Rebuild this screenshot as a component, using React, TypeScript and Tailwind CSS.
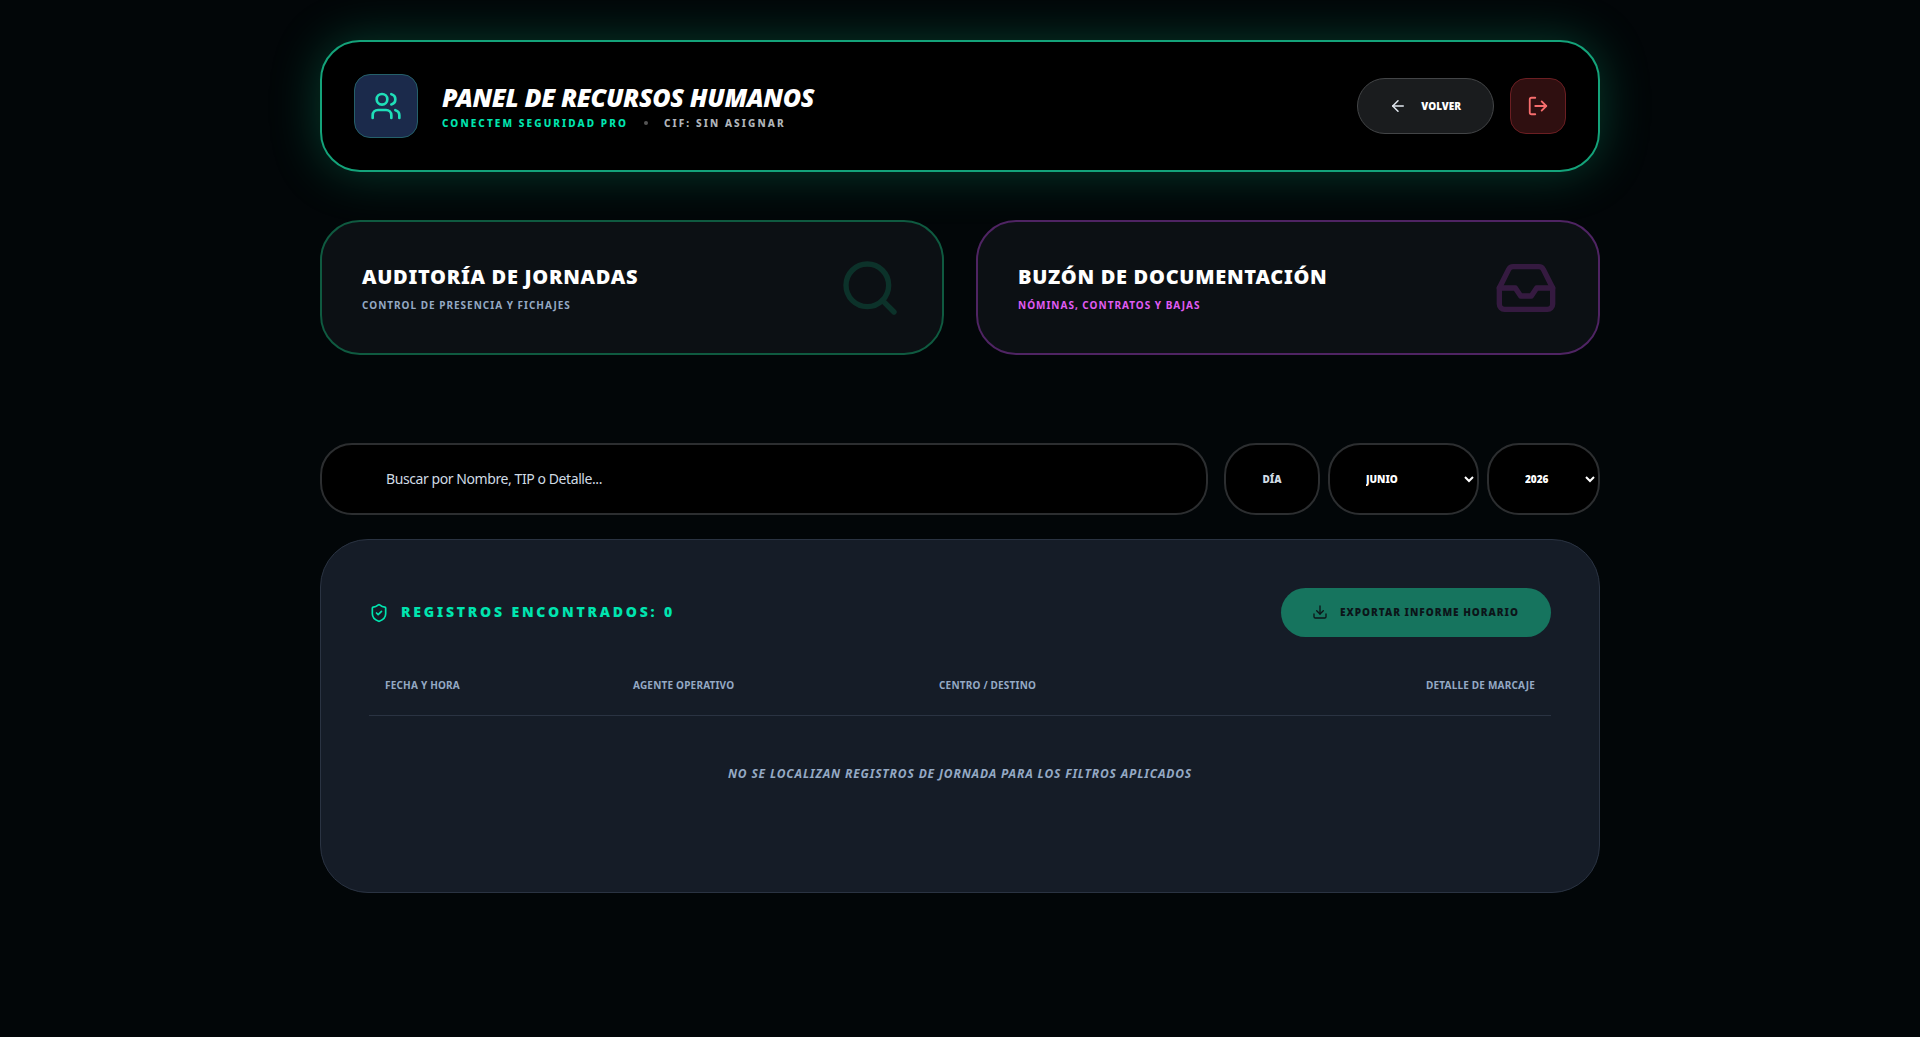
import { ArrowLeft, Download, Inbox, LogOut, Search, ShieldCheck, Users } from "lucide-react";

export default function App() {
  return (
    <div className="min-h-screen bg-[#020608] font-['Noto_Sans','Open_Sans',sans-serif] text-white">
      <main className="mx-auto w-[1280px] pt-10">
        {/* cabecera */}
        <header className="mb-12 flex h-[132px] items-center justify-between rounded-[2.5rem] border-2 border-[#14a37a] bg-black px-8 shadow-[0_0_50px_rgba(16,185,129,0.3)]">
          <div className="flex items-center gap-6">
            <div className="flex h-16 w-16 items-center justify-center rounded-2xl border border-[#25606a] bg-[#1b2a4b]">
              <Users size={32} className="text-[#1fdfb8]" />
            </div>
            <div>
              <h1 className="text-[25px] leading-8 font-black tracking-[-0.015em] text-white italic">
                PANEL DE RECURSOS HUMANOS
              </h1>
              <div className="mt-0.5 flex items-center gap-4 text-[10px] leading-4 font-extrabold tracking-[0.21em]">
                <span className="text-[#00e5b0]">CONECTEM SEGURIDAD PRO</span>
                <span className="h-1 w-1 rounded-full bg-[#555]"></span>
                <span className="text-[#b0b5ba]">CIF: SIN ASIGNAR</span>
              </div>
            </div>
          </div>
          <div className="flex items-center gap-4">
            <button className="flex h-14 items-center gap-[14px] rounded-full border border-[#434547] bg-[#1a1c1e] pr-8 pl-[31px] text-[10px] font-black text-white">
              <ArrowLeft size={18} className="text-[#e2e8f0]" />
              VOLVER
            </button>
            <button className="flex h-14 w-14 items-center justify-center rounded-2xl border border-[#6b1e22] bg-[#2f0f10] text-[#f76d6d]">
              <LogOut size={22} />
            </button>
          </div>
        </header>

        {/* accesos */}
        <div className="mb-[88px] grid grid-cols-2 gap-8">
          <div className="flex h-[135px] items-center justify-between rounded-[2.5rem] border-2 border-[#0f5a40] bg-[#0c1014] px-10">
            <div>
              <h2 className="text-xl leading-7 font-black tracking-[0.035em] text-white">AUDITORÍA DE JORNADAS</h2>
              <p className="mt-1.5 text-[10px] leading-4 font-bold tracking-widest text-[#94a9c4]">CONTROL DE PRESENCIA Y FICHAJES</p>
            </div>
            <Search size={64} className="text-[#10b981] opacity-20" />
          </div>
          <div className="flex h-[135px] items-center justify-between rounded-[2.5rem] border-2 border-[#4f2463] bg-[#0c1014] px-10">
            <div>
              <h2 className="text-xl leading-7 font-black tracking-[0.035em] text-white">BUZÓN DE DOCUMENTACIÓN</h2>
              <p className="mt-1.5 text-[10px] leading-4 font-bold tracking-widest text-[#e05cf5]">NÓMINAS, CONTRATOS Y BAJAS</p>
            </div>
            <Inbox size={64} className="text-[#d946ef] opacity-20" />
          </div>
        </div>

        {/* filtros */}
        <div className="mb-6 flex h-[72px] gap-4">
          <input
            type="text"
            placeholder="Buscar por Nombre, TIP o Detalle..."
            className="h-full flex-1 rounded-[2rem] border-2 border-[#2c2e30] bg-black pb-0.5 pl-16 text-sm tracking-[-0.03em] text-white outline-none placeholder:text-[#d0dbe4]"
          />
          <div className="flex gap-2">
            <input
              type="text"
              placeholder="DÍA"
              className="h-full w-[96px] rounded-[2rem] border-2 border-[#2c2e30] bg-black text-center text-[10px] font-black text-white outline-none placeholder:text-[#d0dbe4]"
            />
            <select className="h-full w-[151px] rounded-[2rem] border-2 border-[#2c2e30] bg-black px-8 text-[10px] font-black text-white outline-none" defaultValue="JUNIO">
              <option>JUNIO</option>
            </select>
            <select className="h-full w-[113px] rounded-[2rem] border-2 border-[#2c2e30] bg-black px-8 text-[10px] font-black text-white outline-none" defaultValue="2026">
              <option>2026</option>
            </select>
          </div>
        </div>

        {/* registros */}
        <section className="h-[354px] rounded-[3rem] border border-[#2a3342] bg-[#151c27] p-12">
          <div className="mb-[41px] flex h-[49px] items-center justify-between">
            <div className="flex items-center gap-3">
              <ShieldCheck size={20} className="text-[#00e5b0]" />
              <h3 className="pb-px text-sm font-black tracking-[0.2em] text-[#00e5b0]">REGISTROS ENCONTRADOS: 0</h3>
            </div>
            <button className="flex h-[49px] items-center gap-3 rounded-full bg-[#16745e] pr-8 pb-px pl-[31px] text-[10px] font-black tracking-[0.1em] text-[#0c1519]">
              <Download size={16} />
              EXPORTAR INFORME HORARIO
            </button>
          </div>
          <table className="w-full table-fixed text-left">
            <thead>
              <tr className="border-b border-[#2a3342] text-[10px] tracking-[0.02em] text-[#94a9c4]">
                <th className="w-[248px] px-4 pb-[22px] font-bold">FECHA Y HORA</th>
                <th className="w-[306px] px-4 pb-[22px] font-bold">AGENTE OPERATIVO</th>
                <th className="px-4 pb-[22px] font-bold">CENTRO / DESTINO</th>
                <th className="w-[300px] px-4 pb-[22px] text-right font-bold">DETALLE DE MARCAJE</th>
              </tr>
            </thead>
            <tbody>
              <tr>
                <td colSpan={4} className="py-[50px] text-center text-xs font-bold tracking-[0.07em] text-[#94a9c4] italic">
                  NO SE LOCALIZAN REGISTROS DE JORNADA PARA LOS FILTROS APLICADOS
                </td>
              </tr>
            </tbody>
          </table>
        </section>
      </main>
    </div>
  );
}
